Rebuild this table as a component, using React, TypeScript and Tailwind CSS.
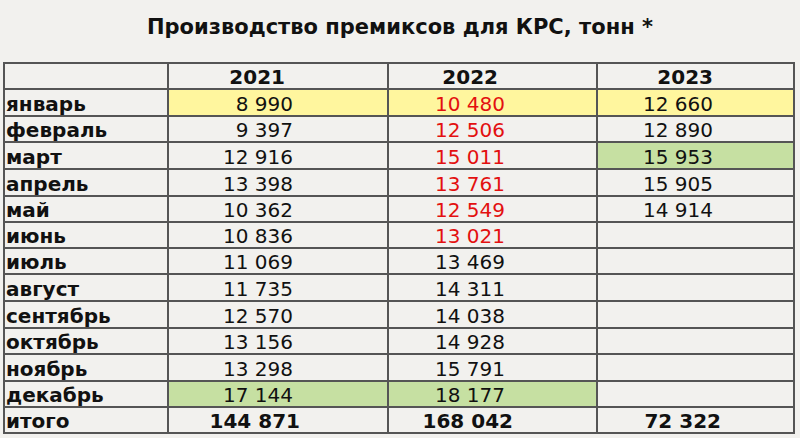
const rows: { m: string; a: string; b: string; c: string; h: string; bg?: [string, string, string] }[] = [
  { m: "январь", a: "8 990", b: "10 480", c: "12 660", h: "h-[27px]", bg: ["y", "y", "y"] },
  { m: "февраль", a: "9 397", b: "12 506", c: "12 890", h: "h-[26px]" },
  { m: "март", a: "12 916", b: "15 011", c: "15 953", h: "h-[27px]", bg: ["", "", "g"] },
  { m: "апрель", a: "13 398", b: "13 761", c: "15 905", h: "h-[27px]" },
  { m: "май", a: "10 362", b: "12 549", c: "14 914", h: "h-[26px]" },
  { m: "июнь", a: "10 836", b: "13 021", c: "", h: "h-[26px]" },
  { m: "июль", a: "11 069", b: "13 469", c: "", h: "h-[26px]" },
  { m: "август", a: "11 735", b: "14 311", c: "", h: "h-[27px]" },
  { m: "сентябрь", a: "12 570", b: "14 038", c: "", h: "h-[27px]" },
  { m: "октябрь", a: "13 156", b: "14 928", c: "", h: "h-[26px]" },
  { m: "ноябрь", a: "13 298", b: "15 791", c: "", h: "h-[27px]" },
  { m: "декабрь", a: "17 144", b: "18 177", c: "", h: "h-[26px]", bg: ["g", "g", ""] },
];

const redMonths = ["январь", "февраль", "март", "апрель", "май", "июнь"];

function bgClass(v?: string) {
  if (v === "y") return "bg-[#fff69e]";
  if (v === "g") return "bg-[#c6e0a2]";
  return "";
}

export default function App() {
  return (
    <div
      className="w-[800px] h-[438px] overflow-hidden bg-[#f2f1ee] text-[#111]"
      style={{ fontFamily: '"DejaVu Sans", Verdana, sans-serif' }}
    >
      <h1 className="h-[62px] pt-[13px] text-center text-[21px] font-bold leading-[28px]">
        Производство премиксов для КРС, тонн *
      </h1>
      <table className="ml-[3px] w-[792px] table-fixed border-collapse border-2 border-[#555] text-[20px] leading-none">
        <colgroup>
          <col className="w-[164px]" />
          <col className="w-[220px]" />
          <col className="w-[209px]" />
          <col className="w-[197px]" />
        </colgroup>
        <tbody>
          <tr className="h-[26px] font-bold">
            <td className="border-2 border-[#555]"></td>
            <td className="border-2 border-[#555] text-right pr-[102px] pt-[2px]">2021</td>
            <td className="border-2 border-[#555] text-right pr-[98px] pt-[2px]">2022</td>
            <td className="border-2 border-[#555] text-right pr-[80px] pt-[2px]">2023</td>
          </tr>
          {rows.map((r) => (
            <tr key={r.m} className={r.h}>
              <td className="border-2 border-[#555] pl-[1px] pt-[2px] font-bold">{r.m}</td>
              <td className={`border-2 border-[#555] text-right pr-[94px] pt-[2px] ${bgClass(r.bg?.[0])}`}>{r.a}</td>
              <td
                className={`border-2 border-[#555] text-right pr-[91px] pt-[2px] ${bgClass(r.bg?.[1])} ${
                  redMonths.includes(r.m) ? "text-[#e31010]" : ""
                }`}
              >
                {r.b}
              </td>
              <td className={`border-2 border-[#555] text-right pr-[80px] pt-[2px] ${bgClass(r.bg?.[2])}`}>{r.c}</td>
            </tr>
          ))}
          <tr className="h-[26px] font-bold">
            <td className="border-2 border-[#555] pl-[1px] pt-[2px]">итого</td>
            <td className="border-2 border-[#555] text-right pr-[87px] pt-[2px]">144 871</td>
            <td className="border-2 border-[#555] text-right pr-[83px] pt-[2px]">168 042</td>
            <td className="border-2 border-[#555] text-right pr-[72px] pt-[2px]">72 322</td>
          </tr>
        </tbody>
      </table>
    </div>
  );
}
